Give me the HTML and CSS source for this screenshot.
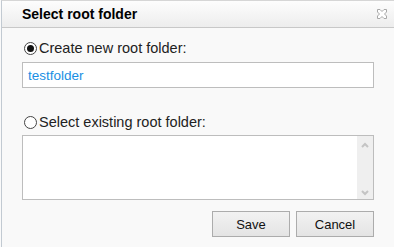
FILE: index.html
```html
<!DOCTYPE html>
<html>
<head>
<meta charset="utf-8">
<link rel="stylesheet" href="styles.css">
</head>
<body>
<div class="dialog">
  <div class="titlebar">
    <span class="title">Select root folder</span>
    <span class="close">
      <svg width="12" height="12" viewBox="0 0 12 12">
        <path d="M1.5 1.5 L4 1.5 L6 3.5 L8 1.5 L10.5 1.5 L10.5 4 L8.5 6 L10.5 8 L10.5 10.5 L8 10.5 L6 8.5 L4 10.5 L1.5 10.5 L1.5 8 L3.5 6 L1.5 4 Z" fill="#fff" stroke="#a8a8a8" stroke-width="1"/>
      </svg>
    </span>
  </div>
  <div class="content">
    <label class="option">
      <span class="radio checked"></span>
      <span>Create new root folder:</span>
    </label>
    <div class="textbox">testfolder</div>
    <label class="option second">
      <span class="radio"></span>
      <span>Select existing root folder:</span>
    </label>
    <div class="listbox">
      <div class="list-area"></div>
      <div class="scrollbar">
        <svg width="16" height="10" viewBox="0 0 16 10"><path d="M5 7 L8 4 L11 7" fill="none" stroke="#c4c4c4" stroke-width="2"/></svg>
        <svg width="16" height="10" viewBox="0 0 16 10"><path d="M5 3 L8 6 L11 3" fill="none" stroke="#c4c4c4" stroke-width="2"/></svg>
      </div>
    </div>
    <div class="buttons">
      <button class="btn">Save</button>
      <button class="btn">Cancel</button>
    </div>
  </div>
</div>
</body>
</html>
```

FILE: styles.css
```css
html, body {
  margin: 0;
  padding: 0;
  background: #fafafa;
  font-family: "Liberation Sans", sans-serif;
}
.dialog {
  margin-left: 1px;
  border-left: 1px solid #c2cad2;
  border-top: 1px solid #d6d6d6;
  background: #f9f9f9;
  height: 246px;
}
.titlebar {
  height: 26px;
  display: flex;
  align-items: center;
  justify-content: space-between;
  padding: 0 6px 0 20px;
  background: linear-gradient(#fdfdfd, #ededed);
  border-bottom: 1px solid #c8c8c8;
}
.title {
  font-family: "Liberation Sans", sans-serif;
  font-weight: bold;
  font-size: 14px;
  color: #000;
}
.close {
  display: flex;
  width: 12px;
  height: 12px;
}
.content {
  padding: 10px 20px 0 20px;
}
.option {
  display: flex;
  align-items: center;
  gap: 2px;
  height: 20px;
  font-family: "Liberation Sans", sans-serif;
  font-size: 14.5px;
  color: #222;
  margin-left: 2px;
}
.option.second {
  margin-top: 24px;
}
.radio {
  width: 11px;
  height: 11px;
  border: 1px solid #444;
  border-radius: 50%;
  box-sizing: content-box;
  background: #fff;
  position: relative;
}
.radio.checked::after {
  content: "";
  position: absolute;
  left: 2px;
  top: 2px;
  width: 7px;
  height: 7px;
  border-radius: 50%;
  background: #111;
}
.textbox {
  margin-top: 4px;
  height: 24px;
  border: 1px solid #bdbdbd;
  background: #fff;
  display: flex;
  align-items: center;
  padding-left: 5px;
  font-family: "Liberation Sans", sans-serif;
  font-size: 13.5px;
  color: #1a8fe3;
}
.listbox {
  margin-top: 3px;
  height: 63px;
  border: 1px solid #bdbdbd;
  background: #fff;
  display: flex;
}
.list-area {
  flex: 1;
}
.scrollbar {
  width: 16px;
  background: #efefef;
  display: flex;
  flex-direction: column;
  justify-content: space-between;
  padding: 4px 0 1px;
}
.scrollbar svg {
  display: block;
}
.buttons {
  display: flex;
  justify-content: flex-end;
  gap: 6px;
  margin-top: 11px;
}
.btn {
  width: 78px;
  height: 26px;
  border: 1px solid #acacac;
  background: linear-gradient(#f2f2f2, #e4e4e4);
  font-family: "Liberation Sans", sans-serif;
  font-size: 13px;
  color: #111;
  padding: 0;
}
```
